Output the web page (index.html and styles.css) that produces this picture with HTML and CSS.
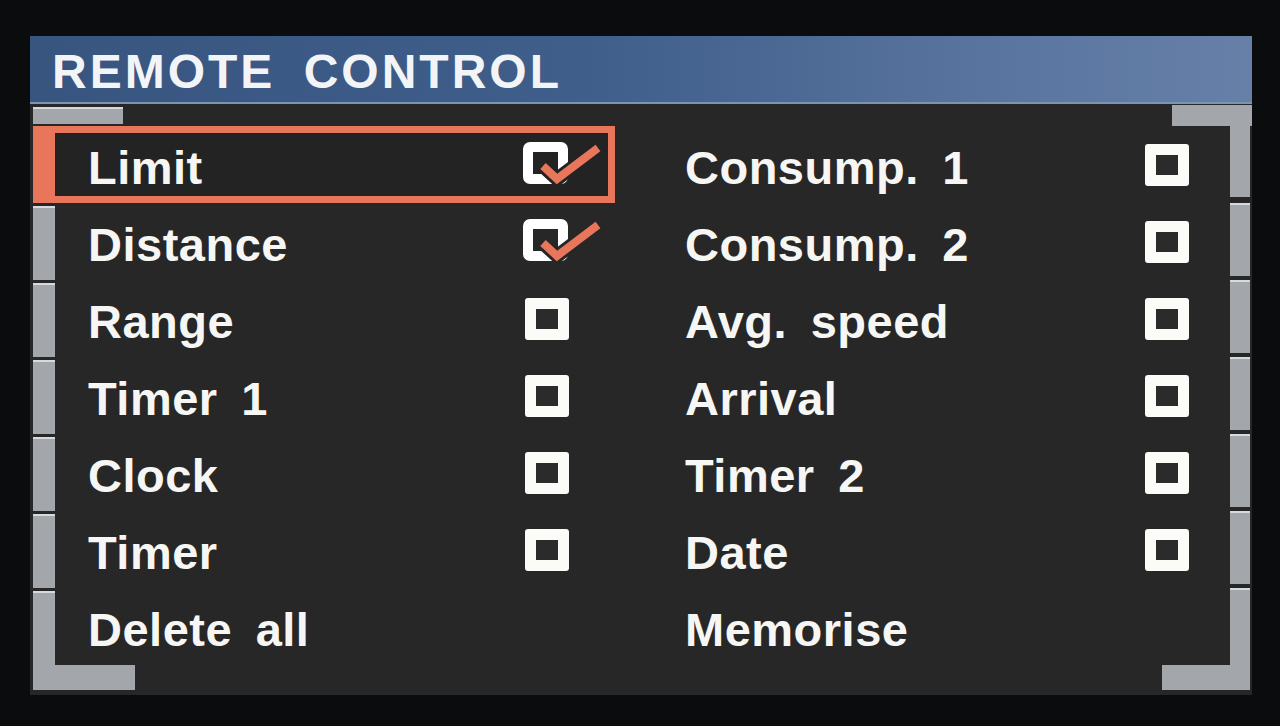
FILE: index.html
```html
<!DOCTYPE html>
<html>
<head>
<meta charset="utf-8">
<link rel="stylesheet" href="styles.css">
</head>
<body>
<div class="screen">
  <div class="header">REMOTE CONTROL</div>
  <div class="panel">
    <div class="strip top">
      <span class="bar bar-tl"></span>
      <span class="bar bar-tr"></span>
    </div>
    <div class="grid">
      <div class="item left selected"><span class="tab"></span><span class="label">Limit</span><span class="box-zone"><svg class="cb-checked" viewBox="0 0 84 52" width="84" height="52"><rect x="8" y="8" width="35" height="32" rx="2" fill="none" stroke="#fff" stroke-width="10"/><polyline points="23,27 37,40 78,9" fill="none" stroke="#232323" stroke-width="14" stroke-linejoin="miter"/><polyline points="23,27 37,40 78,9" fill="none" stroke="#e8765b" stroke-width="8"/></svg></span></div>
      <div class="item right"><span class="label">Consump. 1</span><span class="cb"></span><span class="tab tab-first"></span></div>

      <div class="item left"><span class="tab"></span><span class="label">Distance</span><span class="box-zone"><svg class="cb-checked" viewBox="0 0 84 52" width="84" height="52"><rect x="8" y="8" width="35" height="32" rx="2" fill="none" stroke="#fff" stroke-width="10"/><polyline points="23,27 37,40 78,9" fill="none" stroke="#272727" stroke-width="14" stroke-linejoin="miter"/><polyline points="23,27 37,40 78,9" fill="none" stroke="#e8765b" stroke-width="8"/></svg></span></div>
      <div class="item right"><span class="label">Consump. 2</span><span class="cb"></span><span class="tab"></span></div>

      <div class="item left"><span class="tab"></span><span class="label">Range</span><span class="box-zone"><span class="cb"></span></span></div>
      <div class="item right"><span class="label">Avg. speed</span><span class="cb"></span><span class="tab"></span></div>

      <div class="item left"><span class="tab"></span><span class="label">Timer 1</span><span class="box-zone"><span class="cb"></span></span></div>
      <div class="item right"><span class="label">Arrival</span><span class="cb"></span><span class="tab"></span></div>

      <div class="item left"><span class="tab"></span><span class="label">Clock</span><span class="box-zone"><span class="cb"></span></span></div>
      <div class="item right"><span class="label">Timer 2</span><span class="cb"></span><span class="tab"></span></div>

      <div class="item left"><span class="tab"></span><span class="label">Timer</span><span class="box-zone"><span class="cb"></span></span></div>
      <div class="item right"><span class="label">Date</span><span class="cb"></span><span class="tab"></span></div>

      <div class="item left"><span class="tab tab-last"></span><span class="label">Delete all</span><span class="box-zone"></span></div>
      <div class="item right"><span class="label">Memorise</span><span class="cb cb-none"></span><span class="tab tab-last"></span></div>
    </div>
    <div class="strip bottom">
      <span class="bar bar-bl"></span>
      <span class="bar bar-br"></span>
    </div>
  </div>
</div>
</body>
</html>
```

FILE: styles.css
```css
html, body {
  margin: 0;
  padding: 0;
  background: #0b0c0e;
}

body {
  width: 1280px;
  height: 726px;
  overflow: hidden;
  font-family: "Liberation Sans", Arial, sans-serif;
  font-weight: bold;
  color: #f6f6f4;
}

.screen {
  margin: 36px 28px 0 30px;
  width: 1222px;
}

.header {
  box-sizing: content-box;
  height: 62px;
  padding-top: 4px;
  padding-left: 22px;
  line-height: 64px;
  font-size: 48px;
  letter-spacing: 3px;
  word-spacing: 12px;
  color: #f2f4f6;
  background: linear-gradient(90deg, #37557f 0%, #3f5e8a 45%, #5a75a0 80%, #6680a8 100%);
  border-bottom: 2px solid #7b93b5;
}

.panel {
  background: #272727;
  height: 591px;
  display: flex;
  flex-direction: column;
}

.strip {
  display: flex;
  justify-content: space-between;
}

.strip.top {
  height: 22px;
}

.strip.bottom {
  height: 30px;
}

.bar {
  display: block;
  background: #a3a7ac;
  border-top: 2px solid #d4d8dc;
  box-sizing: border-box;
}

.bar-tl {
  width: 90px;
  height: 17px;
  margin-top: 3px;
  margin-left: 3px;
}

.bar-tr {
  width: 80px;
  height: 21px;
  margin-top: 1px;
  border-top: none;
}

.bar-bl {
  width: 102px;
  height: 25px;
  margin-left: 3px;
  border-top: none;
}

.bar-br {
  width: 88px;
  height: 25px;
  margin-right: 2px;
  border-top: none;
}

.grid {
  display: grid;
  grid-template-columns: 610px 1fr;
  grid-auto-rows: 77px;
}

.item {
  display: flex;
  align-items: stretch;
  font-size: 47px;
  line-height: 77px;
  word-spacing: 10px;
  letter-spacing: 0.5px;
}

.item .label {
  flex: 1;
  padding-top: 3px;
  white-space: nowrap;
}

.tab {
  display: block;
  width: 22px;
  height: 74px;
  background: #a3a7ac;
  border-top: 2px solid #d6dadf;
  box-sizing: border-box;
  flex: none;
}

.item.left {
  width: 582px;
  margin-left: 3px;
}

.item.left .tab {
  margin-top: 3px;
}

.item.left .tab-last {
  height: 77px;
}

.item.left .label {
  padding-left: 33px;
}

.item.left.selected {
  box-shadow: inset 0 0 0 7px #e8765b;
  background: #232323;
}

.item.left.selected .tab {
  background: #e8765b;
  border-top: none;
  height: 77px;
  margin-top: 0;
}

.box-zone {
  width: 90px;
  display: flex;
  align-items: center;
  flex: none;
}

.cb {
  display: block;
  width: 44px;
  height: 42px;
  box-sizing: border-box;
  border: 11px solid #fbfbf8;
  border-radius: 3px;
  background: #2b2b2b;
  flex: none;
}

.cb-none {
  visibility: hidden;
}

.cb-checked {
  display: block;
  margin-left: -5px;
}

.item.right {
  margin-right: 2px;
}

.item.right .label {
  padding-left: 45px;
}

.item.right .cb {
  align-self: center;
  margin-right: 41px;
}

.item.right .tab {
  width: 20px;
  height: 73px;
  margin-bottom: 4px;
}

.item.right .tab-first {
  border-top: none;
  height: 71px;
}

.item.right .tab-last {
  height: 77px;
  margin-bottom: 0;
}
```
